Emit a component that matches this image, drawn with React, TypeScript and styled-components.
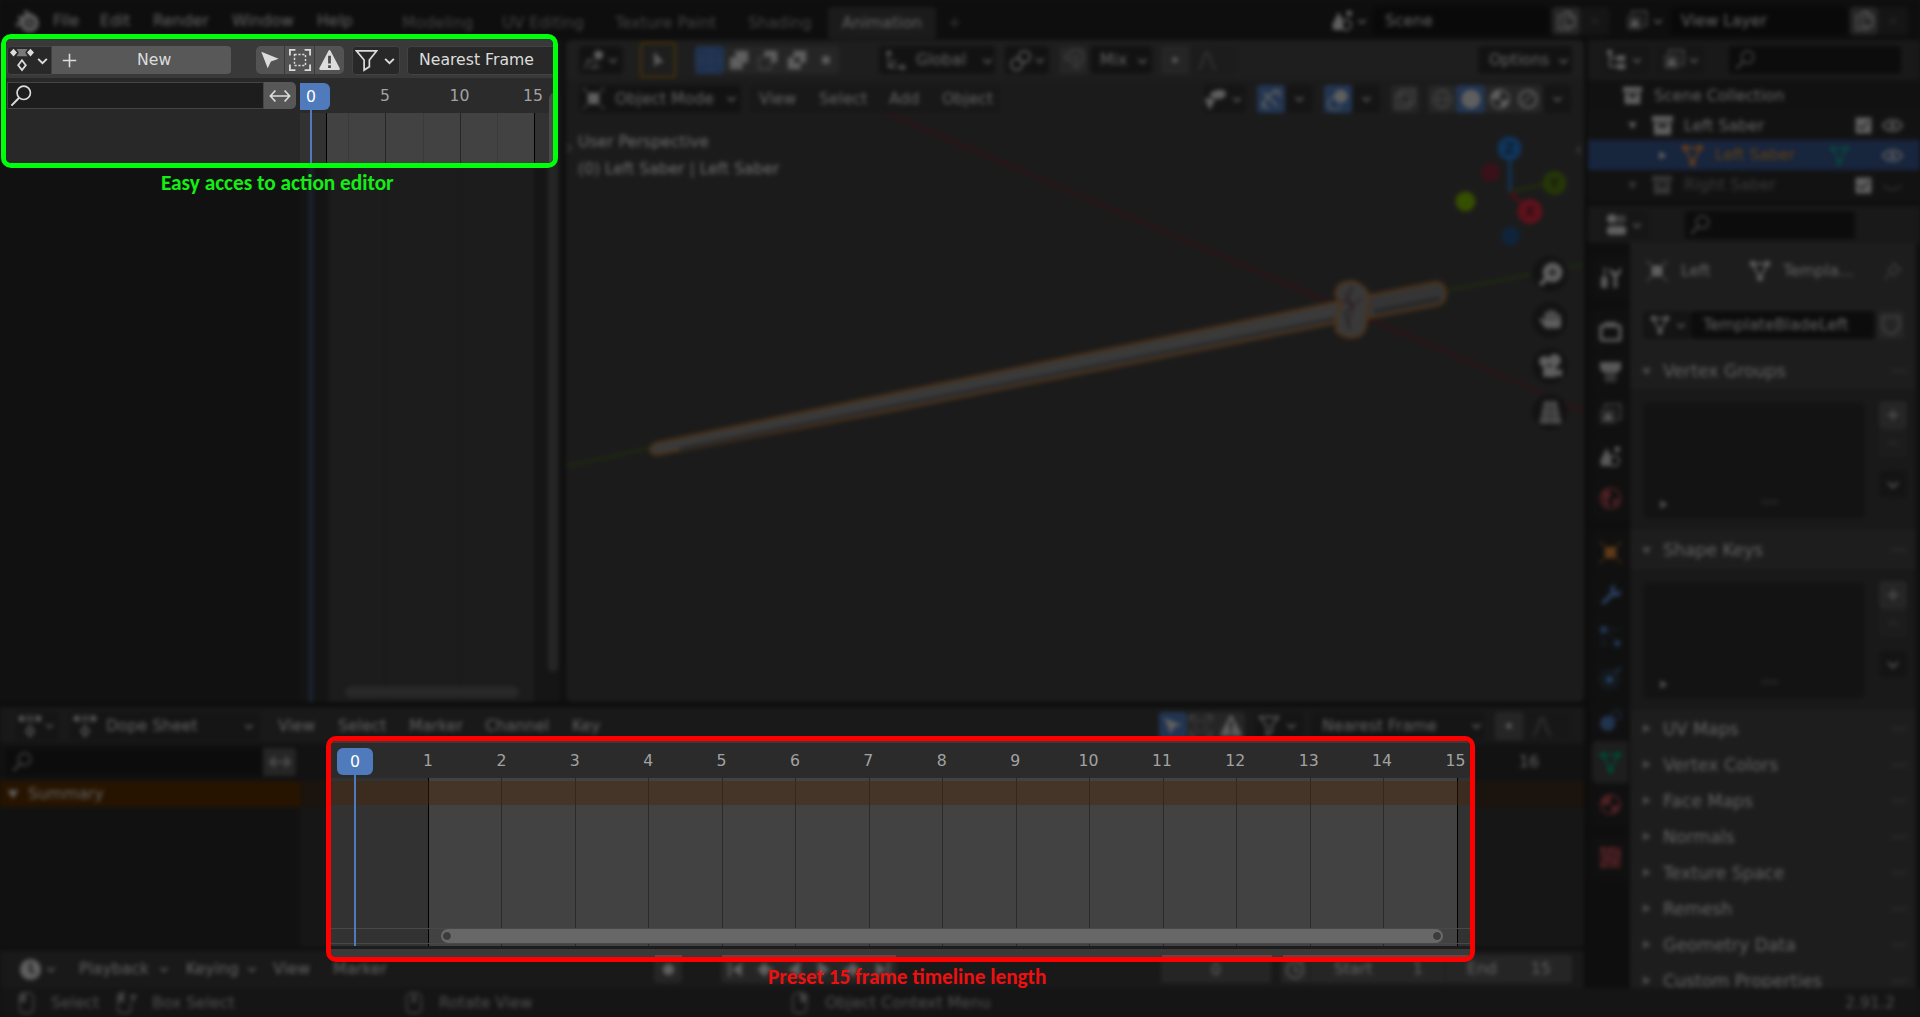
import React from "react";
import styled, { createGlobalStyle, css } from "styled-components";

const Global = createGlobalStyle`
  html, body { margin: 0; background: #111; }
  body { width: 1920px; height: 1017px; overflow: hidden; }
  * { box-sizing: border-box; }
`;

const c = {
  header: "#393939",
  dark: "#282828",
  field: "#1d1d1d",
  button: "#575757",
  text: "#dcdcdc",
  blue: "#4f7abc",
  view: "#3f3f3f",
};

/* ---------- shared primitives ---------- */

const Screen = styled.div`
  position: relative;
  width: 1920px;
  height: 1017px;
  overflow: hidden;
  background: #111;
  font-family: "DejaVu Sans", sans-serif;
  font-size: 15.7px;
  color: ${c.text};
`;

const Backdrop = styled.div`
  display: flex;
  flex-direction: column;
  width: 1920px;
  height: 1017px;
  background: #222;
  color: #e6e6e6;
  filter: blur(2.3px) brightness(0.43);
`;

const Bar = styled.div<{ $h: number; $bg?: string; $pt?: number }>`
  display: flex;
  align-items: center;
  flex: 0 0 ${(p) => p.$h}px;
  height: ${(p) => p.$h}px;
  padding-top: ${(p) => p.$pt ?? 0}px;
  background: ${(p) => p.$bg ?? "transparent"};
  overflow: hidden;
`;

const Text = styled.span<{ $w: number; $l?: number; $dim?: number; $c?: string }>`
  flex: 0 0 ${(p) => p.$w}px;
  width: ${(p) => p.$w}px;
  margin-left: ${(p) => p.$l ?? 0}px;
  opacity: ${(p) => p.$dim ?? 1};
  color: ${(p) => p.$c ?? "inherit"};
  line-height: 20px;
  white-space: nowrap;
`;

const Box = styled.div<{ $w: number; $l?: number; $bg?: string; $h?: number; $r?: string; $center?: boolean; $line?: string }>`
  display: flex;
  align-items: center;
  justify-content: ${(p) => (p.$center ? "center" : "flex-start")};
  flex: 0 0 ${(p) => p.$w}px;
  width: ${(p) => p.$w}px;
  height: ${(p) => p.$h ?? 28}px;
  margin-left: ${(p) => p.$l ?? 0}px;
  background: ${(p) => p.$bg ?? c.dark};
  border-radius: ${(p) => p.$r ?? "4px"};
  ${(p) => p.$line && css`box-shadow: inset 0 0 0 1px ${p.$line};`}
  overflow: hidden;
  white-space: nowrap;
`;

const Svg = styled.svg<{ $l?: number; $c?: string; $dim?: number }>`
  flex: none;
  display: block;
  margin-left: ${(p) => p.$l ?? 0}px;
  color: ${(p) => p.$c ?? c.text};
  opacity: ${(p) => p.$dim ?? 1};
`;

/* ---------- icons ---------- */

const line = { fill: "none", stroke: "currentColor", strokeWidth: 1.8 } as const;

const icons: Record<string, React.ReactNode> = {
  dope: (
    <>
      <path d="M3.500 .8 7 4.600 3.500 8.400 0 4.600zM20.500 .8 24 4.600l-3.500 3.800L17 4.600z" fill="currentColor" />
      <path d="M6.500 1h11l-2.300 3.600L17.500 8.200h-11l2.300-3.600z" fill="currentColor" opacity=".45" />
      <path d="M12 12.300 15.800 17.200 12 22.100 8.200 17.200z" {...line} />
    </>
  ),
  chev: <path d="M6.500 10 12 15.500 17.500 10" {...line} strokeWidth={2.400} />,
  plus: <path d="M12 3.500v17M3.500 12h17" {...line} strokeWidth={2} />,
  minus: <path d="M4 12h16" {...line} />,
  cross: <path d="M6 6l12 12M18 6 6 18" {...line} />,
  cursor: <path d="M2.500 3 21.500 10.500 13 13.500 9.500 21z" fill="currentColor" />,
  marquee: (
    <>
      <path d="M1 7V1h6M17 1h6v6M23 17v6h-6M7 23H1v-6" {...line} strokeWidth={2} />
      <path d="M6 6h12v12H6z" {...line} strokeWidth={1.600} strokeDasharray="2.400 1.800" />
    </>
  ),
  warn: (
    <>
      <path d="M12 1.500 22.500 21.500h-21z" fill="currentColor" stroke="currentColor" strokeWidth="2.600" strokeLinejoin="round" />
      <path d="M12 6.500v9M12 17.500v3" stroke="#4a4a4a" strokeWidth="3.200" />
    </>
  ),
  filter: <path d="M1.500 2h21l-7.500 9.500v7L9.500 22v-10.500z" {...line} />,
  search: (
    <>
      <circle cx="15" cy="8.500" r="7.300" {...line} />
      <path d="M10 14 1.500 22.500" {...line} strokeWidth={2.200} />
    </>
  ),
  swap: <path d="M1.500 12h21M7 6 1.500 12 7 18M17 6l5.500 6-5.500 6" {...line} />,
  logo: (
    <>
      <circle cx="14.500" cy="14" r="7" fill="none" stroke="currentColor" strokeWidth="4.500" />
      <path d="M1 17 14 5.500M3 8.500h11M9.500 2l7 5.500" stroke="currentColor" strokeWidth="3" fill="none" />
      <circle cx="14.500" cy="14" r="2.800" fill="currentColor" />
    </>
  ),
  scene: (
    <>
      <path d="M8 3 13 13v9H2l-.5-6z" fill="currentColor" />
      <circle cx="15.500" cy="16.500" r="5.500" {...line} />
      <circle cx="19" cy="4.500" r="3" fill="currentColor" />
    </>
  ),
  layers: (
    <>
      <path d="M6 5V1.500h16.500V17H19" {...line} opacity=".7" />
      <rect x="1" y="6" width="17" height="16" rx="2" fill="currentColor" opacity=".35" />
      <path d="M4 18l5.500-9 5.500 9z" fill="currentColor" />
    </>
  ),
  copy: (
    <>
      <path d="M9 1h7l7 7v11H9zM15 2v7h7" {...line} />
      <path d="M6 5H2v18h15v-2" {...line} />
    </>
  ),
  view3d: (
    <>
      <circle cx="17" cy="6.500" r="5" fill="currentColor" />
      <path d="M1 22 8 10M3 13h9M12 22l3-9M6 20h13" {...line} opacity=".7" />
    </>
  ),
  arrow: <path d="M7 2 19 15l-7 .5L8 21z" fill="currentColor" />,
  union: <path d="M8 2h14v13h-6v7H2V9h6z" fill="currentColor" />,
  subtract: (
    <>
      <path d="M8 2h14v13h-6V8H8z" fill="currentColor" />
      <path d="M2 9h13v13H2z" {...line} strokeDasharray="2 2" />
    </>
  ),
  invert: (
    <path d="M8 2h14v13h-6v7H2V9h6zM9 9.500v5.500h6V9z" fill="currentColor" fillRule="evenodd" />
  ),
  intersect: <path d="M8 8h8v8H8z" fill="currentColor" />,
  axes: (
    <>
      <path d="M5 3v16h16M5 19l8-8" {...line} strokeWidth={2.200} strokeDasharray="4 2" />
      <path d="M1 6l4-5 4 5zM18 15l5 4-5 4z" fill="currentColor" />
    </>
  ),
  link: (
    <>
      <circle cx="8" cy="16" r="6" {...line} />
      <circle cx="16" cy="8" r="6" {...line} />
    </>
  ),
  magnet: <path d="M3 9 9 3a8 8 0 0 1 12 12l-5 6-4-4 5-5a3 3 0 0 0-4-4l-5 5z" {...line} />,
  dot: <circle cx="12" cy="12" r="3" fill="currentColor" />,
  curve: <path d="M2 22C8 22 8 3 12 3s4 19 10 19" {...line} />,
  object: (
    <>
      <rect x="6" y="6" width="12" height="12" fill="currentColor" />
      <path d="M1 1l4 4M23 1l-4 4M23 23l-4-4M1 23l4-4" {...line} strokeWidth={2.500} opacity=".5" />
    </>
  ),
  visibility: (
    <>
      <path d="M5 9c0-7 17-10 18-3 0 5-8 8-13 5z" fill="currentColor" />
      <path d="M1 12l9 1-5 9z" fill="currentColor" stroke="currentColor" strokeWidth="2" />
    </>
  ),
  gizmo: (
    <path d="M3 21C5 11 11 5 21 3M21 3h-7M21 3v7M4 5l15 15M3 21v-6M3 21h7" {...line} strokeWidth={2.200} />
  ),
  overlay: (
    <>
      <circle cx="15" cy="9" r="7.500" fill="currentColor" />
      <path d="M7 10a7 7 0 1 0 8 9" {...line} />
    </>
  ),
  xray: (
    <>
      <path d="M7 2h15v15H7z" {...line} />
      <path d="M2 7h15v15H2z" {...line} />
    </>
  ),
  wire: (
    <>
      <circle cx="12" cy="12" r="10" {...line} />
      <ellipse cx="12" cy="12" rx="4.500" ry="10" {...line} />
      <path d="M2 12h20" {...line} />
    </>
  ),
  solid: <circle cx="12" cy="12" r="10.500" fill="currentColor" />,
  material: (
    <>
      <circle cx="12" cy="12" r="10" {...line} />
      <path d="M12 2a10 10 0 0 0-10 10l8 1 3-5zM13 13h8a10 10 0 0 1-8 8z" fill="currentColor" />
    </>
  ),
  rendered: (
    <>
      <circle cx="12" cy="12" r="9.500" {...line} strokeWidth={3} />
      <path d="M7 16 17 6" {...line} />
    </>
  ),
  hand: (
    <path
      d="M8 14V5M12 12V3M16 12V4M20 14V7M3 11l5 7h12l1-5H8"
      fill="currentColor"
      stroke="currentColor"
      strokeWidth="3"
      strokeLinecap="round"
      strokeLinejoin="round"
    />
  ),
  camera: (
    <>
      <circle cx="6" cy="7" r="5" fill="currentColor" />
      <circle cx="16" cy="6" r="6" fill="currentColor" />
      <path d="M5 12h13v10H5zM18 16l5-2v8l-5-2z" fill="currentColor" />
    </>
  ),
  grid: (
    <>
      <path d="M6 1h12l5 22H1z" fill="currentColor" opacity=".7" />
      <path d="M4 8h16M2 15h20M12 1v22" stroke="#555" strokeWidth=".8" />
    </>
  ),
  zoomIn: (
    <>
      <circle cx="14" cy="10" r="9.500" fill="currentColor" />
      <path d="M8 16l-6 6" stroke="currentColor" strokeWidth="4" />
      <path d="M14 6v8M10 10h8" stroke="#444" strokeWidth="2" />
    </>
  ),
  tree: (
    <>
      <path d="M4 3v16h8M4 10h8" {...line} />
      <path d="M1 1h6v5H1zM12 7h9v6h-9zM12 16h9v6h-9z" fill="currentColor" />
    </>
  ),
  archive: (
    <>
      <path d="M1 2h22v6H1z" fill="currentColor" />
      <path d="M3 9h18v13H3zM8 11v3h8v-3z" fill="currentColor" fillRule="evenodd" />
    </>
  ),
  triDown: <path d="M4 6h16l-8 13z" fill="currentColor" />,
  triRight: <path d="M6 4v16l14-8z" fill="currentColor" />,
  mesh: (
    <>
      <path d="M4 4h16L12 20z" {...line} strokeWidth={2.200} />
      <circle cx="4" cy="4" r="3.200" fill="currentColor" />
      <circle cx="20" cy="4" r="3.200" fill="currentColor" />
      <circle cx="12" cy="20" r="3.200" fill="currentColor" />
    </>
  ),
  check: <path d="M2 2h20v20H2zM6 11l-1 1 5 6 9-11-1-1-8 9z" fill="currentColor" fillRule="evenodd" />,
  eye: (
    <>
      <path d="M1 12C6 4 18 4 23 12 18 20 6 20 1 12z" {...line} strokeWidth={3} />
      <circle cx="12" cy="12" r="3.500" fill="currentColor" />
    </>
  ),
  eyeClosed: <path d="M2 12c5 6 15 6 20 0" {...line} />,
  props: (
    <>
      <rect x="1" y="1" width="21" height="9" rx="4" fill="currentColor" opacity=".5" />
      <circle cx="6" cy="5" r="5" fill="currentColor" />
      <rect x="1" y="13" width="21" height="10" rx="4" fill="currentColor" />
    </>
  ),
  pin: <path d="M13 3l8 8-4 1-3 6-8-8 6-3zM9 15l-7 7" {...line} />,
  shield: <path d="M3 3h18v10c0 5-6 8-9 9-3-1-9-4-9-9z" {...line} />,
  tools: (
    <>
      <path d="M6 1v10" {...line} strokeWidth={2} />
      <rect x="2" y="11" width="7" height="12" rx="2" fill="currentColor" />
      <path d="M11 1v6l4 4v12h4V11l4-4V1l-4 5h-4z" fill="currentColor" />
    </>
  ),
  render: (
    <>
      <rect x="2" y="7" width="20" height="15" rx="2" {...line} strokeWidth={3.500} />
      <path d="M6 3h12v3H6z" fill="currentColor" />
    </>
  ),
  output: (
    <>
      <path d="M1 1h22v7l-3 4H4L1 8z" fill="currentColor" />
      <path d="M6 12h12v10H6z" fill="currentColor" opacity=".5" />
    </>
  ),
  world: (
    <>
      <circle cx="12" cy="12" r="10.500" {...line} />
      <path d="M3 6l7-3 3 6-4 4 2 8-5-2zM15 13l6-1-3 8-4-2z" fill="currentColor" />
    </>
  ),
  wrench: <path d="M2 20 12 10V4l5-3-1 6 3 2 5-2-3 7h-6L5 23z" fill="currentColor" />,
  particles: (
    <>
      <circle cx="5" cy="5" r="4" fill="currentColor" />
      <circle cx="19" cy="19" r="3.500" fill="currentColor" />
      <path d="M11 5h11M4 13v9M11 10l2 2M4 20h6" {...line} strokeDasharray="3 2" opacity=".6" />
    </>
  ),
  physics: (
    <>
      <circle cx="11" cy="13" r="9" {...line} opacity=".5" />
      <circle cx="11" cy="13" r="4.500" fill="currentColor" />
      <path d="M17 6l5-5" {...line} strokeWidth={3} opacity=".7" />
    </>
  ),
  constraint: (
    <>
      <circle cx="9" cy="15" r="8" fill="currentColor" />
      <circle cx="18" cy="6" r="4.500" {...line} opacity=".7" />
    </>
  ),
  texture: (
    <>
      <path d="M1 1h22v22H1z" fill="currentColor" opacity=".65" />
      <path d="M1 1h5v5H1zM10 1h5v5h-5zM18 6h5v5h-5zM6 10h5v5H6zM14 14h5v5h-5zM1 18h5v5H1z" fill="currentColor" />
    </>
  ),
  clock: (
    <>
      <circle cx="12" cy="12" r="11" fill="currentColor" />
      <path d="M12 5v8l4 3" stroke="#444" strokeWidth="2.500" fill="none" />
    </>
  ),
  timer: (
    <>
      <circle cx="12" cy="13" r="9" {...line} />
      <path d="M12 8v6h5M18 2l3 3" {...line} />
    </>
  ),
  first: <path d="M3 3v18h3V3zM20 3v18L8 12z" fill="currentColor" />,
  last: <path d="M18 3v18h3V3zM4 3v18l12-9z" fill="currentColor" />,
  prevKey: <path d="M12 3l-9 9 9 9 6-7h5v-4h-5z" fill="currentColor" />,
  nextKey: <path d="M12 3l9 9-9 9-6-7H1v-4h5z" fill="currentColor" />,
  back: <path d="M19 2v20L4 12z" fill="currentColor" />,
  play: <path d="M5 2v20l15-10z" fill="currentColor" />,
  mouseL: (
    <>
      <rect x="5" y="1" width="15" height="22" rx="5" {...line} />
      <path d="M5 2h7v9H5z" fill="currentColor" />
    </>
  ),
  mouseDrag: (
    <>
      <path d="M16 12v6q0 5-5 5H7q-5 0-5-5V6q0-5 5-5h3" {...line} />
      <path d="M2 2h7v9H2zM15 3h8v3h-3v5h-3V6h-2z" fill="currentColor" />
    </>
  ),
  mouseR: (
    <>
      <rect x="4" y="1" width="15" height="22" rx="5" {...line} />
      <path d="M12 2h8v9h-8z" fill="currentColor" />
    </>
  ),
  mouseM: (
    <>
      <rect x="4" y="1" width="16" height="22" rx="5" {...line} />
      <path d="M10 3h4v9h-4z" fill="currentColor" />
    </>
  ),
  grip: <path d="M1 10h22M1 14h22" {...line} strokeDasharray="3 2" opacity=".6" />,
};

type IconProps = { n: string; s?: number; l?: number; color?: string; dim?: number };
const Icon = ({ n, s = 22, l, color, dim }: IconProps) => (
  <Svg width={s} height={s} viewBox="0 0 24 24" $l={l} $c={color} $dim={dim}>
    {icons[n]}
  </Svg>
);

/* ---------- top bar ---------- */

const TopBar = () => (
  <Bar $h={40} $bg="#202020" $pt={1}>
    <Icon n="logo" s={24} l={15} />
    <Text $w={26} $l={14}>File</Text>
    <Text $w={31} $l={21}>Edit</Text>
    <Text $w={58} $l={22}>Render</Text>
    <Text $w={62} $l={21}>Window</Text>
    <Text $w={37} $l={23}>Help</Text>
    <TabRow>
      <Text $w={72} $l={48} $dim={0.6}>Modeling</Text>
      <Text $w={86} $l={28} $dim={0.6}>UV Editing</Text>
      <Text $w={104} $l={27} $dim={0.6}>Texture Paint</Text>
      <Text $w={65} $l={29} $dim={0.6}>Shading</Text>
      <Box $w={108} $l={15} $h={32} $bg="#3f3f3f" $center>Animation</Box>
      <Icon n="plus" s={15} l={11} dim={0.6} />
    </TabRow>
    <Icon n="scene" s={23} l={369} />
    <Icon n="chev" s={16} l={0} />
    <Box $w={176} $l={3} $bg="#161616">
      <Text $w={60} $l={12}>Scene</Text>
    </Box>
    <Box $w={28} $l={3} $bg={c.button} $center><Icon n="copy" s={19} /></Box>
    <Box $w={30} $bg="#303030" $center><Icon n="cross" s={14} dim={0.35} /></Box>
    <Icon n="layers" s={22} l={16} />
    <Icon n="chev" s={16} l={2} />
    <Box $w={176} $l={5} $bg="#161616">
      <Text $w={90} $l={10}>View Layer</Text>
    </Box>
    <Box $w={28} $l={3} $bg={c.button} $center><Icon n="copy" s={19} /></Box>
    <Box $w={30} $bg="#303030" $center><Icon n="cross" s={14} dim={0.35} /></Box>
  </Bar>
);

const TabRow = styled.div`
  display: flex;
  align-items: center;
  padding-top: 4px;
`;

/* ---------- 3D viewport ---------- */

const Viewport = styled.section`
  position: relative;
  display: flex;
  flex-direction: column;
  flex: 0 0 1018px;
  height: 662px;
  background: ${c.view};
  border-radius: 6px;
  overflow: hidden;
`;

const Scene = styled.svg`
  position: absolute;
  inset: 0;
  width: 1018px;
  height: 662px;
`;

const Info = styled.div`
  margin: 11px 0 0 12px;
  line-height: 27px;
  font-size: 15.6px;
  color: #fff;
  position: relative;
`;

const NavStack = styled.div`
  position: absolute;
  right: 16px;
  top: 216px;
  display: flex;
  flex-direction: column;
  gap: 10px;
`;

const NavButton = styled.div`
  display: grid;
  place-items: center;
  width: 36px;
  height: 36px;
  border-radius: 50%;
  background: #2c2c2c;
`;

const ToolBox = styled.div`
  display: grid;
  place-items: center;
  flex: 0 0 36px;
  height: 36px;
  margin-left: 17px;
  border: 2px solid #a8700c;
  border-radius: 3px;
`;

const HeaderRow = styled(Bar)`
  position: relative;
  z-index: 1;
`;

const Viewport3D = () => (
  <Viewport>
    <Scene viewBox="566 40 1018 662">
      <path d="M880 110 1584 411" stroke="#7c2232" strokeWidth="2.600" opacity=".8" />
      <path d="M566 466 650 448M1445 291l139-27" stroke="#43631c" strokeWidth="2.600" />
      <g stroke="#b07235" strokeWidth="2.400" strokeLinejoin="round">
        <path d="M656 443 890 394 1240 322 1340 301 1340 322 1240 342 890 411 656 455Q644 450 656 443z" fill="#868686" />
        <path d="M1366 296 1436 282Q1446 283 1446 295 1445 303 1438 305L1364 319z" fill="#7c7c7c" />
        <path d="M1338 286Q1346 279 1356 282 1368 288 1370 298L1366 315Q1369 328 1360 336 1347 341 1336 331L1336 318 1341 306 1335 294z" fill="#858585" />
      </g>
      <path d="M680 449 890 407 1334 319" fill="none" stroke="#5c5c5c" strokeWidth="3.500" />
      <path d="M1374 312 1440 299" stroke="#606060" strokeWidth="6" />
      <path d="M1352 286l-4 13 6 8-9 6 5 16" fill="none" stroke="#4c5056" strokeWidth="2" />
      <path d="M1340 300l12 5 10-6M1344 292l8 20-4 14" fill="none" stroke="#7c4c52" strokeWidth="1.600" />
      <path d="M1510 192V148" stroke="#2a6fb8" strokeWidth="4" />
      <path d="M1510 192 1545 184" stroke="#4a691a" strokeWidth="3" />
      <path d="M1510 192 1524 206" stroke="#a02638" strokeWidth="4" />
      <circle cx="1509.500" cy="148.500" r="12" fill="#2579d2" />
      <circle cx="1490.500" cy="172.500" r="9.500" fill="#84273a" />
      <circle cx="1465.500" cy="201.500" r="10" fill="#7cb500" />
      <circle cx="1554.500" cy="183" r="12" fill="#567d12" />
      <circle cx="1530" cy="211.500" r="12.500" fill="#d8293f" />
      <circle cx="1510.500" cy="236" r="9.500" fill="#235488" />
      <g fill="#222" fontSize="14" textAnchor="middle" fontFamily="DejaVu Sans, sans-serif">
        <text x="1509.500" y="153">Z</text>
        <text x="1554.500" y="188">Y</text>
        <text x="1530" y="216">X</text>
      </g>
      <path d="M567 144l4 4-4 4M1581 146l-4 4 4 4" fill="none" stroke="#999" strokeWidth="1.500" />
    </Scene>
    <HeaderRow $h={39} $bg="#454545" $pt={1}>
      <Box $w={44} $l={13} $bg="#2b2b2b">
        <Icon n="view3d" l={4} s={22} />
        <Icon n="chev" s={16} />
      </Box>
      <ToolBox><Icon n="arrow" s={20} /></ToolBox>
      <Box $w={29} $l={19} $bg={c.blue} $center><Icon n="marquee" s={22} color="#3c68b0" /></Box>
      <Box $w={115} $bg={c.button}>
        <Icon n="union" l={4} />
        <Icon n="subtract" l={7} />
        <Icon n="invert" l={7} />
        <Icon n="intersect" l={7} />
      </Box>
      <Box $w={116} $l={40} $bg="#2b2b2b">
        <Icon n="axes" l={5} s={23} />
        <Text $w={56} $l={9}>Global</Text>
        <Icon n="chev" s={17} l={7} />
      </Box>
      <Box $w={44} $l={10} $bg="#2b2b2b"><Icon n="link" s={23} l={4} /><Icon n="chev" s={16} /></Box>
      <Box $w={28} $l={10} $bg={c.button} $center><Icon n="magnet" dim={0.5} /></Box>
      <Box $w={62} $l={3} $bg="#2b2b2b"><Text $w={32} $l={10}>Mix</Text><Icon n="chev" s={17} l={2} /></Box>
      <Box $w={28} $l={9} $bg={c.button} $center><Icon n="dot" /></Box>
      <Box $w={44} $l={3} $bg="#414141"><Icon n="curve" l={4} dim={0.45} /></Box>
      <Box $w={94} $l={242} $bg="#2b2b2b"><Text $w={64} $l={11}>Options</Text><Icon n="chev" s={17} l={2} /></Box>
    </HeaderRow>
    <HeaderRow $h={39}>
      <Box $w={162} $l={13} $bg="#2b2b2b">
        <Icon n="object" s={23} l={3} />
        <Text $w={105} $l={10}>Object Mode</Text>
        <Icon n="chev" s={17} l={3} />
      </Box>
      <Box $w={250} $l={9} $bg="#373737">
        <Text $w={39} $l={9}>View</Text>
        <Text $w={49} $l={21}>Select</Text>
        <Text $w={32} $l={21}>Add</Text>
        <Text $w={54} $l={21}>Object</Text>
      </Box>
      <Box $w={42} $l={204} $bg="#303030"><Icon n="visibility" l={1} /><Icon n="chev" s={16} l={2} /></Box>
      <Box $w={28} $l={11} $bg={c.blue} $center><Icon n="gizmo" /></Box>
      <Box $w={27} $l={1} $bg="#303030" $center><Icon n="chev" s={17} /></Box>
      <Box $w={28} $l={11} $bg={c.blue} $center><Icon n="overlay" /></Box>
      <Box $w={27} $l={1} $bg="#303030" $center><Icon n="chev" s={17} /></Box>
      <Box $w={28} $l={11} $bg={c.button} $center><Icon n="xray" dim={0.6} /></Box>
      <Box $w={28} $l={9} $bg={c.button} $center><Icon n="wire" dim={0.5} /></Box>
      <Box $w={29} $bg={c.blue} $center><Icon n="solid" /></Box>
      <Box $w={57} $bg={c.button}><Icon n="material" l={4} /><Icon n="rendered" l={6} dim={0.8} /></Box>
      <Box $w={27} $l={2} $bg="#303030" $center><Icon n="chev" s={17} /></Box>
    </HeaderRow>
    <Info>
      <div>User Perspective</div>
      <div>(0) Left Saber | Left Saber</div>
    </Info>
    <NavStack>
      {["zoomIn", "hand", "camera", "grid"].map((n) => (
        <NavButton key={n}><Icon n={n} s={25} /></NavButton>
      ))}
    </NavStack>
  </Viewport>
);

/* ---------- dimmed action editor ---------- */

const Row = styled.div`
  display: flex;
`;

const Column = styled.div<{ $w: number }>`
  display: flex;
  flex-direction: column;
  flex: 0 0 ${(p) => p.$w}px;
`;

const ActionPane = styled.section`
  position: relative;
  display: flex;
  flex: 0 0 561px;
  margin-right: 5px;
  height: 662px;
  background: #303030;
`;

const Strip = styled.div<{ $w: number; $bg: string; $edge?: string }>`
  flex: 0 0 ${(p) => p.$w}px;
  background: ${(p) => p.$bg};
  border-left: ${(p) => (p.$edge ? `1px solid ${p.$edge}` : "0")};
`;

const PlayLine = styled.div<{ $x: number; $top: number; $h: number }>`
  position: absolute;
  left: ${(p) => p.$x}px;
  top: ${(p) => p.$top}px;
  width: 2px;
  height: ${(p) => p.$h}px;
  background: ${c.blue};
`;

const Thumb = styled.div<{ $x: number; $y: number; $w: number; $h: number; $bg?: string }>`
  position: absolute;
  left: ${(p) => p.$x}px;
  top: ${(p) => p.$y}px;
  width: ${(p) => p.$w}px;
  height: ${(p) => p.$h}px;
  border-radius: 7px;
  background: ${(p) => p.$bg ?? "#666"};
`;

const DimAction = () => (
  <ActionPane>
    <Strip $w={300} $bg={c.dark} />
    <Strip $w={27} $bg="#2e2e2e" />
    <Strip $w={58} $bg="#404040" $edge="#222" />
    <Strip $w={75} $bg="#404040" $edge="#333" />
    <Strip $w={75} $bg="#404040" $edge="#333" />
    <Strip $w={26} $bg="#303030" $edge="#222" />
    <PlayLine $x={310} $top={0} $h={662} />
    <Thumb $x={548} $y={50} $w={10} $h={582} $bg="#575757" />
    <Thumb $x={345} $y={646} $w={174} $h={12} $bg="#5c5c5c" />
  </ActionPane>
);

/* ---------- dimmed dope sheet ---------- */

const DopeBody = styled.section`
  position: relative;
  display: flex;
  flex: 0 0 204px;
`;

const SummaryRow = styled(Bar)<{ $wide?: boolean }>`
  background: ${(p) => (p.$wide ? "#3f2c1e" : "#5a2e00")};
`;

const DimDope = () => (
  <>
    <Bar $h={36} $bg={c.header} $pt={1}>
      <Box $w={42} $l={16} $bg="#303030"><Icon n="dope" s={24} l={2} /><Icon n="chev" s={15} /></Box>
      <Box $w={190} $l={12} $bg="#303030">
        <Icon n="dope" s={24} l={3} />
        <Text $w={96} $l={9}>Dope Sheet</Text>
        <Icon n="chev" s={16} l={39} />
      </Box>
      <Text $w={39} $l={18}>View</Text>
      <Text $w={50} $l={21}>Select</Text>
      <Text $w={56} $l={21}>Marker</Text>
      <Text $w={67} $l={20}>Channel</Text>
      <Text $w={30} $l={20}>Key</Text>
      <Box $w={28} $l={557} $bg={c.blue} $center><Icon n="cursor" /></Box>
      <Box $w={58} $bg={c.button}><Icon n="marquee" l={3} dim={0.6} /><Icon n="warn" l={8} /></Box>
      <Box $w={48} $l={10} $bg="#303030"><Icon n="filter" l={3} /><Icon n="chev" s={17} l={3} /></Box>
      <Box $w={172} $l={9} $bg="#303030"><Text $w={120} $l={10}>Nearest Frame</Text><Icon n="chev" s={17} l={26} /></Box>
      <Box $w={28} $l={11} $bg={c.button} $center><Icon n="dot" /></Box>
      <Box $w={46} $l={3} $bg="#363636"><Icon n="curve" l={5} dim={0.5} /></Box>
    </Bar>
    <DopeBody>
      <Column $w={300}>
        <Bar $h={38} $bg={c.dark}>
          <Box $w={258} $l={5} $bg={c.field} $r="4px 0 0 4px"><Icon n="search" s={20} l={7} dim={0.7} /></Box>
          <Box $w={33} $bg={c.button} $center $r="0 4px 4px 0"><Icon n="swap" /></Box>
        </Bar>
        <SummaryRow $h={26}>
          <Icon n="triDown" s={16} l={5} />
          <Text $w={90} $l={7}>Summary</Text>
        </SummaryRow>
        <Strip $w={140} $bg={c.dark} />
      </Column>
      <Column $w={1284}>
        <Bar $h={38} $bg="#2b2b2b"><Text $w={30} $l={1219}>16</Text></Bar>
        <SummaryRow $h={26} $wide />
        <Strip $w={140} $bg="#333" />
      </Column>
    </DopeBody>
    <Seam $h={3} />
    <Bar $h={38} $bg={c.header}>
      <Icon n="clock" s={23} l={19} />
      <Icon n="chev" s={16} l={1} />
      <Text $w={72} $l={20}>Playback</Text>
      <Icon n="chev" s={16} l={5} />
      <Text $w={54} $l={14}>Keying</Text>
      <Icon n="chev" s={16} l={4} />
      <Text $w={40} $l={13}>View</Text>
      <Text $w={58} $l={20}>Marker</Text>
      <Box $w={28} $l={263} $bg={c.button} $center><Icon n="solid" s={13} /></Box>
      <Box $w={176} $l={39} $bg={c.button}>
        {["first", "prevKey", "back", "play", "nextKey", "last"].map((n) => (
          <Box key={n} $w={29.3} $bg="transparent" $center><Icon n={n} s={19} /></Box>
        ))}
      </Box>
      <Box $w={110} $l={264} $bg={c.button} $center>0</Box>
      <Box $w={28} $l={10} $bg={c.button} $center $r="4px 0 0 4px"><Icon n="timer" /></Box>
      <Box $w={135} $l={1} $bg={c.button} $r="0">
        <Text $w={40} $l={24}>Start</Text><Text $w={12} $l={39}>1</Text>
      </Box>
      <Box $w={126} $l={1} $bg={c.button} $r="0 4px 4px 0">
        <Text $w={34} $l={21}>End</Text><Text $w={22} $l={30}>15</Text>
      </Box>
    </Bar>
  </>
);

/* ---------- right column ---------- */

const Side = styled.aside`
  display: flex;
  flex-direction: column;
  flex: 0 0 332px;
  height: 948px;
  overflow: hidden;
`;

const Nav = styled.nav`
  display: flex;
  flex-direction: column;
  flex: 0 0 42px;
  padding: 13px 2px 0 4px;
  background: #212121;
`;

const NavTab = styled.div<{ $on?: boolean; $gap?: boolean }>`
  display: flex;
  align-items: center;
  justify-content: center;
  flex: 0 0 42px;
  margin-top: ${(p) => (p.$gap ? 11.5 : 0)}px;
  border-radius: 5px 0 0 5px;
  background: ${(p) => (p.$on ? "#454545" : "#262626")};
`;

const PanelBody = styled.div`
  display: flex;
  flex: 0 0 141px;
  padding: 14px 0 0 14px;
  background: ${c.header};
`;

const List = styled.div`
  display: flex;
  align-items: flex-end;
  width: 220px;
  height: 115px;
  padding-bottom: 7px;
  border-radius: 4px;
  background: #2c2c2c;
`;

const Stack = styled.div`
  display: flex;
  flex-direction: column;
  margin: -2px 0 0 15px;
`;

const ChevSlot = styled(Box)`
  margin-top: 14px;
`;

const PanelTitle = styled.span`
  flex: 0 0 220px;
  margin-left: 10px;
  font-size: 17.3px;
  line-height: 22px;
  white-space: nowrap;
`;

const tabs: [string, string, boolean?, boolean?][] = [
  ["tools", "#ccc"],
  ["render", "#ccc", true],
  ["output", "#ccc"],
  ["layers", "#ccc"],
  ["scene", "#ccc"],
  ["world", "#b84a52"],
  ["object", "#d88438", true],
  ["wrench", "#5785c8"],
  ["particles", "#4879b8"],
  ["physics", "#4688c8"],
  ["constraint", "#4c78b4"],
  ["mesh", "#00a878", false, true],
  ["material", "#b84a52"],
  ["texture", "#b84a52", true],
];

const PanelHead = ({ label, open, h = 36 }: { label: string; open?: boolean; h?: number }) => (
  <Bar $h={h} $bg="#444444" $pt={1}>
    <Icon n={open ? "triDown" : "triRight"} s={13} l={10} dim={0.75} />
    <PanelTitle>{label}</PanelTitle>
    <Icon n="grip" s={16} l={8} dim={0.5} />
  </Bar>
);

const ListPanel = () => (
  <PanelBody>
    <List>
      <Icon n="triRight" s={13} l={13} dim={0.8} />
      <Icon n="grip" s={18} l={91} dim={0.7} />
    </List>
    <Stack>
      <Box $w={28} $h={28} $bg={c.button} $center><Icon n="plus" s={16} /></Box>
      <Box $w={28} $h={29} $bg="#424242" $center><Icon n="minus" s={14} dim={0.4} /></Box>
      <ChevSlot $w={26} $h={24} $l={1} $bg="#2e2e2e" $center><Icon n="chev" s={22} dim={0.8} /></ChevSlot>
    </Stack>
  </PanelBody>
);

const SideColumn = () => (
  <Side>
    <Bar $h={40} $bg={c.header}>
      <Box $w={46} $l={15} $bg="#333"><Icon n="tree" s={22} l={3} /><Icon n="chev" s={16} l={1} /></Box>
      <Box $w={46} $l={9} $bg="#333"><Icon n="layers" s={22} l={5} /><Icon n="chev" s={16} l={1} /></Box>
      <Box $w={172} $l={25} $bg={c.field}><Icon n="search" s={20} l={6} dim={0.7} /></Box>
    </Bar>
    <Bar $h={31} $bg="#282828">
      <Icon n="archive" s={21} l={34} />
      <Text $w={150} $l={11}>Scene Collection</Text>
    </Bar>
    <Bar $h={29} $bg="#2b2b2b">
      <Icon n="triDown" s={13} l={38} />
      <Icon n="archive" s={23} l={12} />
      <Text $w={90} $l={10}>Left Saber</Text>
      <Icon n="check" s={19} l={80} />
      <Icon n="eye" s={21} l={9} dim={0.8} />
    </Bar>
    <Bar $h={30} $bg="#36558f">
      <Icon n="triRight" s={13} l={68} />
      <Icon n="mesh" s={23} l={12} color="#e88c38" />
      <Text $w={90} $l={11} $c="#e8981c">Left Saber</Text>
      <Icon n="mesh" s={21} l={24} color="#16a58a" />
      <Icon n="eye" s={21} l={32} dim={0.8} />
    </Bar>
    <Bar $h={30} $bg="#2b2b2b">
      <Icon n="triDown" s={13} l={38} dim={0.5} />
      <Icon n="archive" s={22} l={12} dim={0.45} />
      <Text $w={90} $l={11} $dim={0.45}>Right Saber</Text>
      <Icon n="check" s={19} l={80} />
      <Icon n="eyeClosed" s={21} l={9} dim={0.4} />
    </Bar>
    <Bar $h={6} $bg="#232323" />
    <Bar $h={37} $bg={c.header}>
      <Box $w={46} $l={15} $bg="#333"><Icon n="props" s={22} l={3} /><Icon n="chev" s={16} l={1} /></Box>
      <Box $w={170} $l={36} $bg={c.field}><Icon n="search" s={20} l={5} dim={0.7} /></Box>
    </Bar>
    <Row>
      <Nav>
        {tabs.map(([n, color, gap, on]) => (
          <NavTab key={n} $gap={gap} $on={on}><Icon n={n} s={23} color={color} /></NavTab>
        ))}
      </Nav>
      <Column $w={286}>
        <Bar $h={54} $bg="#444444" $pt={2}>
          <Icon n="object" s={22} l={16} />
          <Text $w={36} $l={13}>Left</Text>
          <Icon n="mesh" s={22} l={32} />
          <Text $w={75} $l={12}>Templa...</Text>
          <Icon n="pin" s={20} l={25} dim={0.5} />
        </Bar>
        <Bar $h={55} $bg="#444444" $pt={1}>
          <Box $w={48} $l={13} $bg="#2e2e2e"><Icon n="mesh" s={20} l={7} /><Icon n="chev" s={16} l={3} /></Box>
          <Box $w={184} $bg={c.field}><Text $w={150} $l={12}>TemplateBladeLeft</Text></Box>
          <Box $w={26} $l={3} $bg={c.button} $center><Icon n="shield" dim={0.6} /></Box>
        </Bar>
        <PanelHead label="Vertex Groups" open h={37} />
        <ListPanel />
        <PanelHead label="Shape Keys" open h={39} />
        <ListPanel />
        {["UV Maps", "Vertex Colors", "Face Maps", "Normals", "Texture Space", "Remesh", "Geometry Data", "Custom Properties"].map((l) => (
          <PanelHead key={l} label={l} />
        ))}
      </Column>
    </Row>
  </Side>
);

const StatusBar = () => (
  <Bar $h={29} $bg="#303030">
    <Icon n="mouseL" s={22} l={15} dim={0.6} />
    <Text $w={50} $l={14} $dim={0.75}>Select</Text>
    <Icon n="mouseDrag" s={22} l={15} dim={0.6} />
    <Text $w={90} $l={14} $dim={0.75}>Box Select</Text>
    <Icon n="mouseM" s={22} l={161} dim={0.6} />
    <Text $w={100} $l={14} $dim={0.75}>Rotate View</Text>
    <Icon n="mouseR" s={22} l={250} dim={0.6} />
    <Text $w={170} $l={14} $dim={0.75}>Object Context Menu</Text>
    <Text $w={60} $l={850} $dim={0.75}>2.91.2</Text>
  </Bar>
);

/* ---------- highlighted callouts ---------- */

const Callout = styled.section<{ $x: number; $y: number; $w: number; $h: number; $c: string }>`
  position: absolute;
  left: ${(p) => p.$x}px;
  top: ${(p) => p.$y}px;
  width: ${(p) => p.$w}px;
  height: ${(p) => p.$h}px;
  border: 5px solid ${(p) => p.$c};
  border-radius: 10px;
  overflow: hidden;
  background: ${c.dark};
`;

const Caption = styled.div<{ $x: number; $y: number; $c: string }>`
  position: absolute;
  left: ${(p) => p.$x}px;
  top: ${(p) => p.$y}px;
  font: 700 21.3px/24px Carlito, Lato, sans-serif;
  color: ${(p) => p.$c};
  white-space: nowrap;
`;

const Ruler = styled.div`
  display: flex;
  align-items: center;
  flex: 1;
  height: 100%;
  padding-top: 1px;
  background: #2b2b2b;
  color: #a2a2a2;
  overflow: hidden;
`;

const Tick = styled.span<{ $w: number }>`
  flex: 0 0 ${(p) => p.$w}px;
  text-align: center;
  line-height: 20px;
`;

const Badge = styled.span<{ $w: number; $r: string; $pr?: number }>`
  display: flex;
  align-items: center;
  justify-content: center;
  flex: 0 0 ${(p) => p.$w}px;
  width: ${(p) => p.$w}px;
  height: 27px;
  padding-right: ${(p) => p.$pr ?? 0}px;
  border-radius: ${(p) => p.$r};
  background: ${c.blue};
  color: #fff;
`;

const Tracks = styled.div<{ $h: number }>`
  display: flex;
  height: ${(p) => p.$h}px;
`;

const Toggle = styled(Box)`
  border-right: 1px solid #3a3a3a;
`;

const ActionCallout = () => (
  <Callout $x={1} $y={34} $w={557} $h={134} $c="#00ff0a">
    <Bar $h={39} $bg={c.header} $pt={3}>
      <Box $w={45} $h={29} $l={1} $line="#424242" $r="4px 0 0 4px">
        <Icon n="dope" s={24} l={3} />
        <Icon n="chev" s={19} l={-1} />
      </Box>
      <Box $w={179} $bg="#585858" $r="0 4px 4px 0">
        <Icon n="plus" s={19} l={8} />
        <Text $w={40} $l={58}>New</Text>
      </Box>
      <Toggle $w={29} $l={25} $bg="#535353" $center $r="5px 0 0 5px"><Icon n="cursor" s={22} /></Toggle>
      <Toggle $w={30} $bg="#535353" $center $r="0"><Icon n="marquee" s={22} /></Toggle>
      <Box $w={29} $bg="#535353" $center $r="0 5px 5px 0"><Icon n="warn" s={21} /></Box>
      <Box $w={48} $h={29} $l={8} $line="#424242">
        <Icon n="filter" s={23} l={3} />
        <Icon n="chev" s={19} l={2} />
      </Box>
      <Box $w={160} $h={29} $l={7} $line="#424242"><Text $w={130} $l={12}>Nearest Frame</Text></Box>
    </Bar>
    <Bar $h={35} $bg={c.dark}>
      <Box $w={257} $h={27} $l={1} $bg={c.field} $line="#444" $r="0"><Icon n="search" s={22} l={3} /></Box>
      <Box $w={32} $h={27} $bg={c.button} $center $r="0 5px 5px 0"><Icon n="swap" s={22} /></Box>
      <Strip $w={4} $bg={c.dark} />
      <Ruler>
        <Badge $w={30} $r="0 6px 6px 0" $pr={8}>0</Badge>
        <Tick $w={110}>5</Tick>
        <Tick $w={39}>10</Tick>
        <Tick $w={108}>15</Tick>
      </Ruler>
    </Bar>
    <Tracks $h={52}>
      <Strip $w={294} $bg={c.dark} />
      <Strip $w={26} $bg="#323232" />
      <Strip $w={22} $bg="#424242" $edge="#000" />
      <Strip $w={37} $bg="#424242" $edge="#3a3a3a" />
      <Strip $w={38} $bg="#424242" $edge="#262626" />
      <Strip $w={37} $bg="#424242" $edge="#3a3a3a" />
      <Strip $w={37} $bg="#424242" $edge="#262626" />
      <Strip $w={37} $bg="#424242" $edge="#3a3a3a" />
      <Strip $w={30} $bg="#323232" $edge="#000" />
    </Tracks>
    <PlayLine $x={304} $top={70} $h={60} />
    <Thumb $x={543} $y={53} $w={14} $h={100} $bg="#4b4b4b" />
  </Callout>
);

const TimelineRuler = styled(Ruler)`
  flex: 1 0 auto;
  border-top: 2px solid #4a3434;
  padding-left: 6px;
`;

const TrackCell = styled.div<{ $edge: string }>`
  flex: 0 0 73.47px;
  background: #424242;
  border-left: 1px solid ${(p) => p.$edge};
`;

const SummaryTint = styled.div`
  position: absolute;
  left: 0;
  right: 0;
  top: 40px;
  height: 24px;
  background: rgba(76, 36, 3, 0.4);
`;

const Scroll = styled.div`
  position: absolute;
  left: 110px;
  top: 188px;
  display: flex;
  align-items: center;
  justify-content: space-between;
  width: 1002px;
  height: 14px;
  padding: 0 1px;
  border-radius: 7px;
  background: #676767;
`;

const Knob = styled.span`
  width: 10px;
  height: 10px;
  border-radius: 50%;
  border: 1px solid #707070;
  background: #3c3c3c;
`;

const Track = styled.div`
  position: absolute;
  left: 0;
  right: 0;
  top: 187px;
  height: 16px;
  border: solid #484848;
  border-width: 1px 0;
`;

const DarkSeam = styled.div`
  height: 3px;
  background: #1d1d1d;
`;

const FooterEdge = styled(Bar)`
  align-items: flex-end;
`;

const TimelineCallout = () => (
  <Callout $x={326} $y={736} $w={1149} $h={226} $c="#ff0000">
    <Bar $h={37}>
      <TimelineRuler>
        <Badge $w={36} $r="6px">0</Badge>
        <Tick $w={18.3} />
        {Array.from({ length: 15 }, (_, i) => (
          <Tick key={i} $w={i === 14 ? 73.4 : 73.4}>{i + 1}</Tick>
        ))}
      </TimelineRuler>
    </Bar>
    <Tracks $h={168}>
      <Strip $w={97} $bg="#323232" />
      {Array.from({ length: 14 }, (_, i) => (
        <TrackCell key={i} $edge={i === 0 ? "#000" : "#2a2a2a"} />
      ))}
      <Strip $w={20} $bg="#323232" $edge="#000" />
    </Tracks>
    <DarkSeam />
    <FooterEdge $h={8} $bg={c.header}>
      <Box $w={27} $h={2} $l={324} $bg="#6e4242" $r="0" />
      <Box $w={174} $h={2} $l={40} $bg="#6e4242" $r="0" />
      <Box $w={110} $h={2} $l={266} $bg="#6e4242" $r="0" />
      <Box $w={187} $h={2} $l={11} $bg="#6e4242" $r="0" />
    </FooterEdge>
    <SummaryTint />
    <Track />
    <PlayLine $x={23} $top={30} $h={175} />
    <Scroll><Knob /><Knob /></Scroll>
  </Callout>
);

/* ---------- page ---------- */

const Main = styled.div`
  display: flex;
  flex: 0 0 948px;
`;

const Seam = styled.div<{ $w?: number; $h?: number }>`
  flex: 0 0 ${(p) => p.$w ?? p.$h}px;
  background: #1e1e1e;
`;

export default function App() {
  return (
    <Screen>
      <Global />
      <Backdrop>
        <TopBar />
        <Main>
          <Column $w={1584}>
            <Row>
              <DimAction />
              <Viewport3D />
            </Row>
            <Seam $h={5} />
            <DimDope />
          </Column>
          <Seam $w={4} />
          <SideColumn />
        </Main>
        <StatusBar />
      </Backdrop>
      <ActionCallout />
      <TimelineCallout />
      <Caption $x={161} $y={171} $c="#14ee14">Easy acces to action editor</Caption>
      <Caption $x={768} $y={965} $c="#ee1010">Preset 15 frame timeline length</Caption>
    </Screen>
  );
}
